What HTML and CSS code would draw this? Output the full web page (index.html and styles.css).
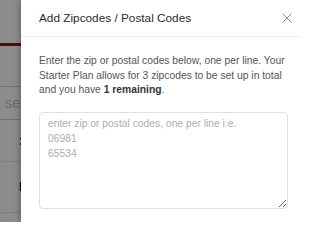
FILE: index.html
```html
<!DOCTYPE html>
<html lang="en">
<head>
<meta charset="utf-8">
<title>Add Zipcodes</title>
<link rel="stylesheet" href="styles.css">
</head>
<body>
<div class="page">
  <div class="bg-header"></div>
  <div class="bg-bar"></div>
  <div class="bg-space"></div>
  <div class="bg-search">search</div>
  <div class="bg-row bg-row-a"><span class="bg-mark">:</span></div>
  <div class="bg-row bg-row-b"><span class="bg-mark">l</span></div>
</div>
<div class="overlay"></div>
<aside class="drawer">
  <header class="drawer-head">
    <h2 class="drawer-title">Add Zipcodes / Postal Codes</h2>
    <svg class="close" width="10" height="10" viewBox="0 0 10 10" aria-label="Close">
      <path d="M0.5 0.5 L9.5 9.5 M9.5 0.5 L0.5 9.5" stroke="#8a8a8a" stroke-width="1" fill="none"/>
    </svg>
  </header>
  <div class="drawer-body">
    <p class="intro">Enter the zip or postal codes below, one per line. Your Starter Plan allows for 3 zipcodes to be set up in total and you have <strong>1 remaining</strong>.</p>
    <textarea class="codes" placeholder="enter zip or postal codes, one per line i.e.&#10;06981&#10;65534"></textarea>
  </div>
</aside>
</body>
</html>
```

FILE: styles.css
```css
html, body {
  margin: 0;
  padding: 0;
}
body {
  position: relative;
  width: 300px;
  height: 222px;
  overflow: hidden;
  font-family: "Liberation Sans", Arial, sans-serif;
  background: #fff;
}
.page {
  display: flex;
  flex-direction: column;
}
.bg-header {
  height: 43px;
  background: #fff;
}
.bg-bar {
  height: 3px;
  background: #861c1c;
}
.bg-space {
  height: 40px;
  background: #fff;
}
.bg-search {
  height: 32px;
  border-top: 1px solid #b9d4ea;
  border-bottom: 1px solid #b9d4ea;
  background: #fff;
  color: #c4c4c4;
  font-size: 14.5px;
  line-height: 32px;
  padding-left: 5px;
  box-sizing: content-box;
}
.bg-row {
  border-bottom: 1px solid #e6e6e6;
  background: #fff;
  display: flex;
  align-items: center;
  padding-left: 19px;
}
.bg-row-a { height: 41px; }
.bg-row-b { height: 50px; }
.bg-mark {
  color: #111;
  font-size: 12px;
  font-weight: bold;
}
.overlay {
  position: absolute;
  inset: 0;
  background: rgba(0, 0, 0, 0.45);
}
.drawer {
  position: absolute;
  top: 0;
  right: 0;
  bottom: 0;
  left: 21px;
  background: #fff;
  box-shadow: -2px 0 5px rgba(0, 0, 0, 0.25);
  display: flex;
  flex-direction: column;
}
.drawer-head {
  height: 36px;
  border-bottom: 1px solid #ececec;
  display: flex;
  align-items: center;
  justify-content: space-between;
  padding: 0 8px 0 18px;
}
.drawer-title {
  margin: 0;
  font-size: 11.8px;
  font-weight: normal;
  color: #2b2b2b;
}
.close {
  display: block;
}
.drawer-body {
  padding: 17px 12px 0 18px;
  display: flex;
  flex-direction: column;
}
.intro {
  margin: 0 -6px 14px 0;
  font-size: 10.3px;
  line-height: 14.7px;
  color: #555;
}
.intro strong {
  color: #333;
  font-weight: bold;
}
.codes {
  box-sizing: border-box;
  width: 100%;
  height: 97px;
  margin: 0;
  border: 1px solid #e0e0e0;
  border-radius: 4px;
  padding: 3px 8px;
  font-family: "Liberation Sans", Arial, sans-serif;
  font-size: 10.3px;
  line-height: 15px;
  color: #333;
  background: #fff;
}
.codes::placeholder {
  color: #adadad;
}
```
